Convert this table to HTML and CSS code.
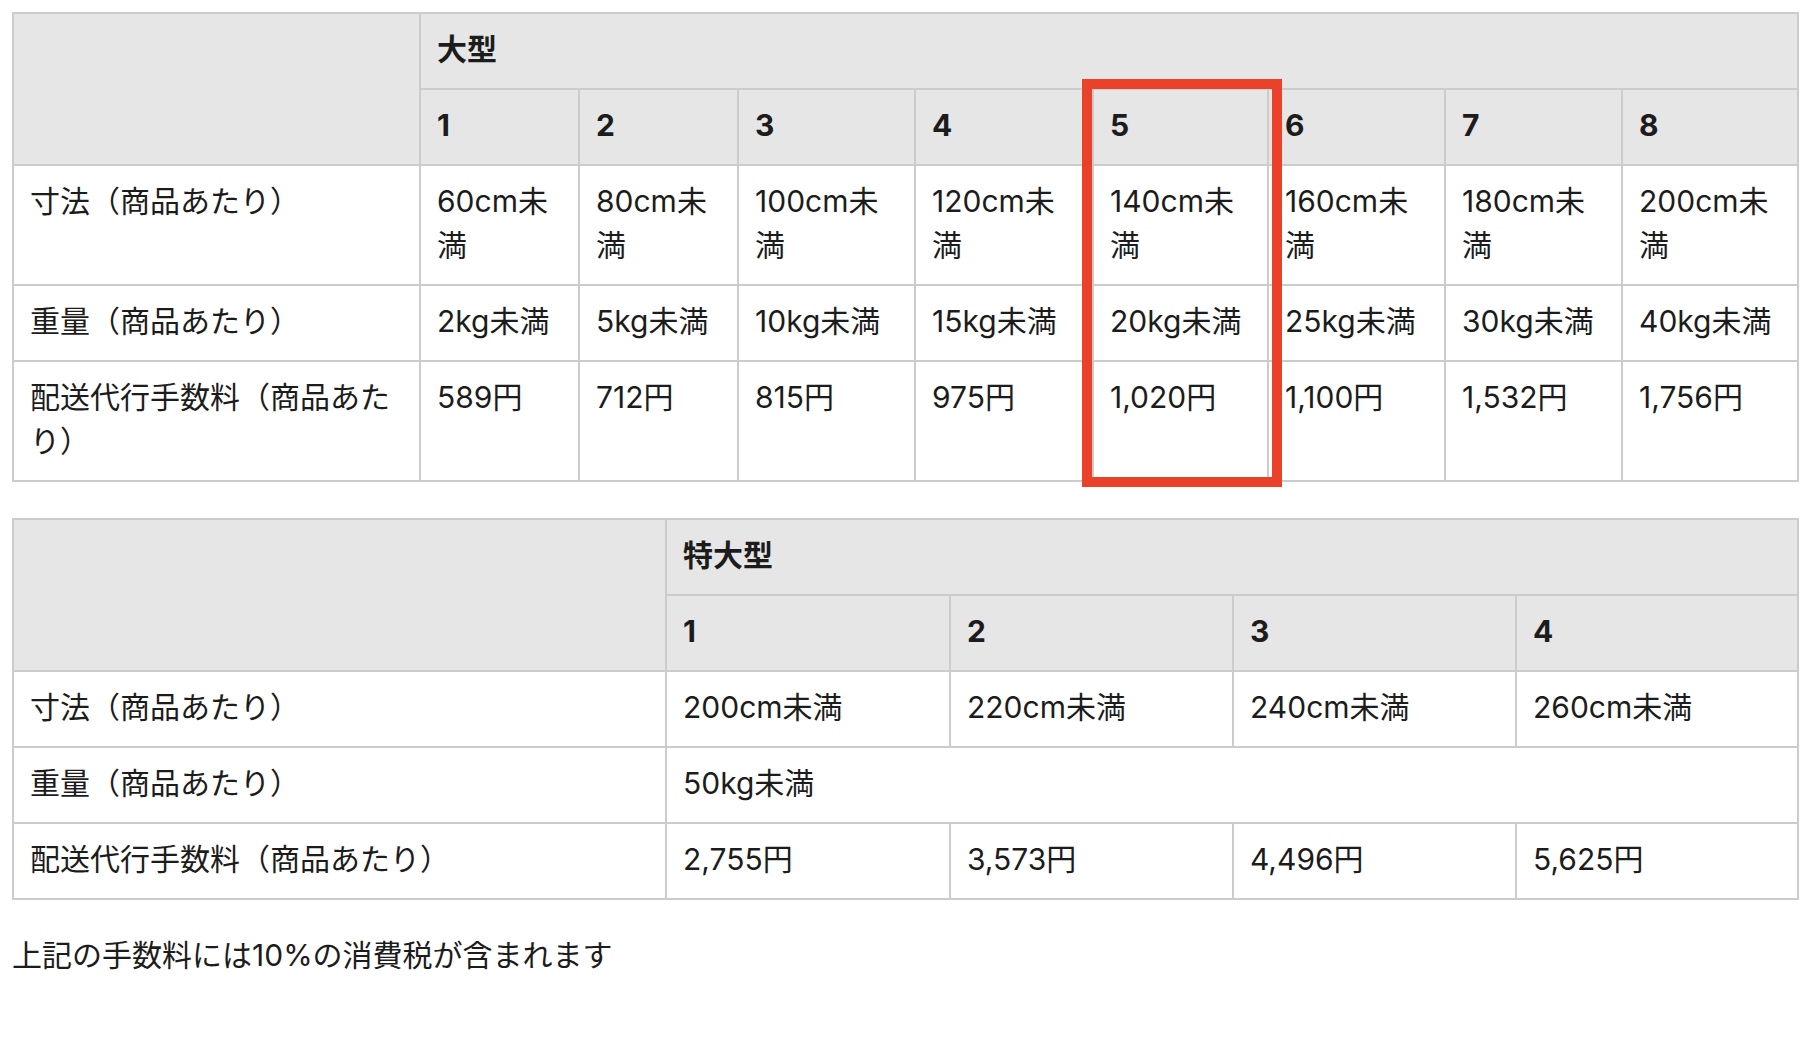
FILE: index.html
```html
<!DOCTYPE html>
<html lang="ja">
<head>
<meta charset="utf-8">
<title>配送代行手数料</title>
<link rel="stylesheet" href="styles.css">
</head>
<body>
<main class="page">
  <div class="table-wrap">
    <table class="fee-table">
      <colgroup>
        <col class="col-label-l">
        <col class="col-a"><col class="col-a"><col class="col-b"><col class="col-c">
        <col class="col-d"><col class="col-b"><col class="col-b"><col class="col-e">
      </colgroup>
      <thead>
        <tr>
          <th class="blank" rowspan="2"></th>
          <th class="group" colspan="8">大型</th>
        </tr>
        <tr>
          <th>1</th><th>2</th><th>3</th><th>4</th><th>5</th><th>6</th><th>7</th><th>8</th>
        </tr>
      </thead>
      <tbody>
        <tr>
          <th class="label">寸法（商品あたり）</th>
          <td>60cm未満</td><td>80cm未満</td><td>100cm未満</td><td>120cm未満</td>
          <td>140cm未満</td><td>160cm未満</td><td>180cm未満</td><td>200cm未満</td>
        </tr>
        <tr>
          <th class="label">重量（商品あたり）</th>
          <td>2kg未満</td><td>5kg未満</td><td>10kg未満</td><td>15kg未満</td>
          <td>20kg未満</td><td>25kg未満</td><td>30kg未満</td><td>40kg未満</td>
        </tr>
        <tr>
          <th class="label">配送代行手数料（商品あたり）</th>
          <td>589円</td><td>712円</td><td>815円</td><td>975円</td>
          <td>1,020円</td><td>1,100円</td><td>1,532円</td><td>1,756円</td>
        </tr>
      </tbody>
    </table>
    <div class="highlight" aria-hidden="true"></div>
  </div>

  <table class="fee-table xl">
    <colgroup>
      <col class="col-label-xl">
      <col class="col-x1"><col class="col-x2"><col class="col-x2"><col class="col-x3">
    </colgroup>
    <thead>
      <tr>
        <th class="blank" rowspan="2"></th>
        <th class="group" colspan="4">特大型</th>
      </tr>
      <tr>
        <th>1</th><th>2</th><th>3</th><th>4</th>
      </tr>
    </thead>
    <tbody>
      <tr>
        <th class="label">寸法（商品あたり）</th>
        <td>200cm未満</td><td>220cm未満</td><td>240cm未満</td><td>260cm未満</td>
      </tr>
      <tr>
        <th class="label">重量（商品あたり）</th>
        <td colspan="4">50kg未満</td>
      </tr>
      <tr>
        <th class="label">配送代行手数料（商品あたり）</th>
        <td>2,755円</td><td>3,573円</td><td>4,496円</td><td>5,625円</td>
      </tr>
    </tbody>
  </table>

  <p class="note">上記の手数料には10%の消費税が含まれます</p>
</main>
</body>
</html>
```

FILE: styles.css
```css
html, body {
  margin: 0;
  padding: 0;
  background: #ffffff;
}

body {
  font-family: Inter, "Noto Sans CJK JP", sans-serif;
  font-size: 30px;
  line-height: 44px;
  color: #1c1c1c;
}

.page {
  padding: 12px;
}

.table-wrap {
  position: relative;
  width: 1787px;
}

.fee-table {
  width: 1787px;
  table-layout: fixed;
  border-collapse: collapse;
  border: 2px solid #cccccc;
}

.fee-table th,
.fee-table td {
  border: 2px solid #cccccc;
  padding: 13px 16px 17px;
  text-align: left;
  vertical-align: top;
  font-weight: normal;
}

.fee-table thead th {
  background: #e6e6e6;
  font-weight: bold;
}

.fee-table .label {
  font-weight: normal;
}

.col-label-l { width: 407px; }
.col-a { width: 159px; }
.col-b { width: 177px; }
.col-c { width: 178px; }
.col-d { width: 175px; }
.col-e { width: 176px; }

.fee-table.xl {
  margin-top: 36px;
}

.col-label-xl { width: 653px; }
.col-x1 { width: 284px; }
.col-x2 { width: 283px; }
.col-x3 { width: 282px; }

.highlight {
  position: absolute;
  left: 1070px;
  top: 67px;
  width: 200px;
  height: 408px;
  box-sizing: border-box;
  border: 10px solid #e9412a;
  pointer-events: none;
}

.note {
  margin: 33px 0 0;
}
```
